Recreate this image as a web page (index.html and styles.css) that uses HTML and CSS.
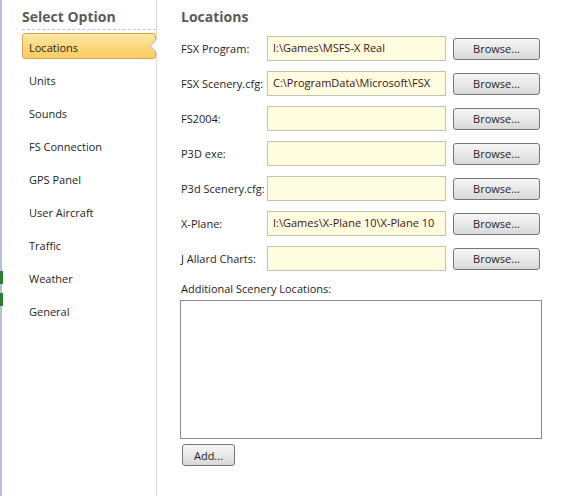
FILE: index.html
```html
<!DOCTYPE html>
<html lang="en">
<head>
  <meta charset="UTF-8">
  <title>Options</title>
  <link rel="stylesheet" href="styles.css">
</head>
<body>
  <div class="window">
    <div class="edge">
      <span class="mark mark-1"></span>
      <span class="mark mark-2"></span>
    </div>

    <!-- option list -->
    <aside class="sidebar">
      <h2 class="side-title">Select Option</h2>
      <ul class="menu">
        <li class="menu-item active">Locations</li>
        <li class="menu-item">Units</li>
        <li class="menu-item">Sounds</li>
        <li class="menu-item">FS Connection</li>
        <li class="menu-item">GPS Panel</li>
        <li class="menu-item">User Aircraft</li>
        <li class="menu-item">Traffic</li>
        <li class="menu-item">Weather</li>
        <li class="menu-item">General</li>
      </ul>
    </aside>

    <!-- locations page -->
    <main class="content">
      <h1 class="page-title">Locations</h1>
      <div class="rows">
        <div class="row">
          <label class="row-label">FSX Program:</label>
          <div class="path">I:\Games\MSFS-X Real</div>
          <button class="btn browse">Browse...</button>
        </div>
        <div class="row">
          <label class="row-label">FSX Scenery.cfg:</label>
          <div class="path">C:\ProgramData\Microsoft\FSX</div>
          <button class="btn browse">Browse...</button>
        </div>
        <div class="row">
          <label class="row-label">FS2004:</label>
          <div class="path"></div>
          <button class="btn browse">Browse...</button>
        </div>
        <div class="row">
          <label class="row-label">P3D exe:</label>
          <div class="path"></div>
          <button class="btn browse">Browse...</button>
        </div>
        <div class="row">
          <label class="row-label">P3d Scenery.cfg:</label>
          <div class="path"></div>
          <button class="btn browse">Browse...</button>
        </div>
        <div class="row">
          <label class="row-label">X-Plane:</label>
          <div class="path">I:\Games\X-Plane 10\X-Plane 10</div>
          <button class="btn browse">Browse...</button>
        </div>
        <div class="row">
          <label class="row-label">J Allard Charts:</label>
          <div class="path"></div>
          <button class="btn browse">Browse...</button>
        </div>
      </div>

      <p class="extra-label">Additional Scenery Locations:</p>
      <div class="listbox"></div>
      <button class="btn add">Add...</button>
    </main>
  </div>
</body>
</html>
```

FILE: styles.css
```css
/* general */
html, body {
  margin: 0;
  height: 100%;
  background: #fff;
}
body {
  font-family: "Open Sans", "Noto Sans", sans-serif;
  font-size: 11px;
  color: #1e1e1e;
}
.window {
  display: flex;
  height: 496px;
}

/* window edge behind the dialog */
.edge {
  width: 2px;
  background: #b3c2d8;
  display: flex;
  flex-direction: column;
}
.mark {
  display: block;
  width: 3px;
  background: #2f7a34;
}
.mark-1 {
  margin-top: 271px;
  height: 13px;
}
.mark-2 {
  margin-top: 9px;
  height: 13px;
}

/* sidebar */
.sidebar {
  width: 134px;
  padding: 0 0 0 20px;
  border-right: 1px solid #dcdcdc;
}
.side-title {
  margin: 0 0 3px 0;
  padding-top: 7px;
  height: 22px;
  line-height: 20px;
  font-size: 14px;
  font-weight: bold;
  color: #5b5b5b;
  border-bottom: 1px dashed #c4c4c4;
}
.menu {
  list-style: none;
  margin: 0;
  padding: 0;
}
.menu-item {
  position: relative;
  height: 26px;
  line-height: 27px;
  padding-left: 6px;
  margin-bottom: 7px;
  border: 1px solid transparent;
  box-sizing: border-box;
}
.menu-item.active {
  background: linear-gradient(#fde9a6, #fbd577 60%, #f9cd62);
  border-color: #dba54a;
  border-radius: 3px;
}
/* notch pointing at the page */
.menu-item.active::after {
  content: "";
  position: absolute;
  right: -2px;
  top: 6px;
  width: 0;
  height: 0;
  border-top: 6px solid transparent;
  border-bottom: 6px solid transparent;
  border-right: 6px solid #fff;
}
.menu-item.active::before {
  content: "";
  position: absolute;
  right: -1px;
  top: 5px;
  width: 0;
  height: 0;
  border-top: 7px solid transparent;
  border-bottom: 7px solid transparent;
  border-right: 7px solid #c9c9c9;
}

/* content */
.content {
  flex: 1;
  padding-left: 24px;
}
.page-title {
  margin: 0 0 9px 0;
  padding-top: 7px;
  line-height: 20px;
  font-size: 14px;
  font-weight: bold;
  color: #5b5b5b;
}
.rows {
  display: flex;
  flex-direction: column;
  gap: 10px;
}
.row {
  display: flex;
  align-items: center;
  height: 25px;
}
.row-label {
  width: 86px;
  flex: none;
}
.path {
  width: 179px;
  height: 25px;
  box-sizing: border-box;
  background: #fefde0;
  border: 1px solid #c2c2b4;
  padding: 0 5px;
  line-height: 22px;
  color: #461414;
  white-space: nowrap;
  overflow: hidden;
}
.btn {
  font-family: inherit;
  font-size: 11px;
  color: #1e1e1e;
  height: 22px;
  padding: 0;
  background: linear-gradient(#f6f6f6, #e8e8e8 50%, #d9d9d9);
  border: 1px solid #767676;
  border-radius: 3px;
}
.browse {
  width: 87px;
  margin-left: 7px;
}
.extra-label {
  margin: 10px 0 0 0;
  line-height: 16px;
}
.listbox {
  width: 362px;
  height: 139px;
  box-sizing: border-box;
  margin: 3px 0 0 -1px;
  border: 1px solid #8c8c8c;
}
.add {
  width: 53px;
  margin: 5px 0 0 1px;
}
```
